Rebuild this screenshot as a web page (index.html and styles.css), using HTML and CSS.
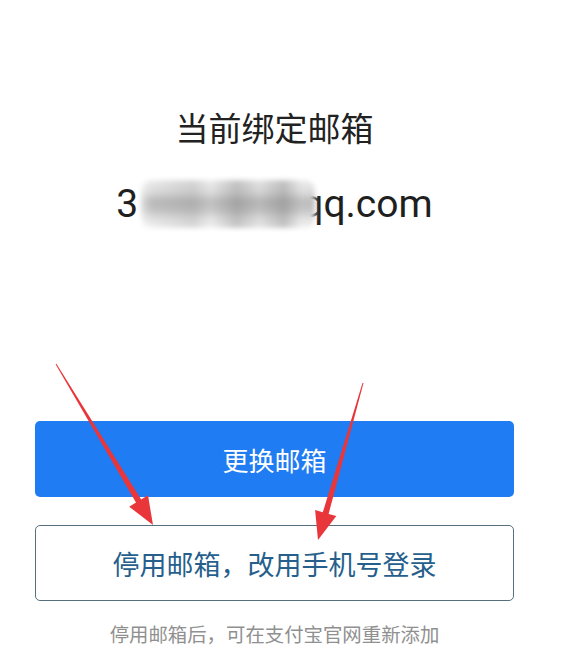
FILE: index.html
```html
<!DOCTYPE html>
<html lang="zh-CN">
<head>
<meta charset="utf-8">
<link rel="stylesheet" href="styles.css">
</head>
<body>
<div class="page">
  <div class="info">
    <div class="title">当前绑定邮箱</div>
    <div class="email"><span>3</span><span class="mask"></span><span class="tail">qq.com</span></div>
  </div>
  <div class="actions">
    <button class="btn primary">更换邮箱</button>
    <button class="btn outline">停用邮箱，改用手机号登录</button>
    <div class="note">停用邮箱后，可在支付宝官网重新添加</div>
  </div>
  <svg class="arrows" width="583" height="666" viewBox="0 0 583 666">
    <polygon fill="#e8363a" points="55.6,364.3 136,502.5 129.2,506.7 153,525 148,495.3 141.2,499.5 56.4,363.7"/>
    <polygon fill="#e8363a" points="362.5,382.9 322.8,512.3 315.1,510.1 318,540 336.3,516.1 328.6,513.9 363.5,383.1"/>
  </svg>
</div>
</body>
</html>
```
FILE: styles.css
```css
html, body {
  margin: 0;
  padding: 0;
  background: #ffffff;
}
.page {
  position: relative;
  width: 583px;
  height: 666px;
  overflow: hidden;
  font-family: "Noto Sans CJK SC", "Noto Sans", sans-serif;
}
.info {
  width: 479px;
  margin-left: 35px;
  padding-top: 105px;
  display: flex;
  flex-direction: column;
  align-items: center;
}
.title {
  font-size: 33px;
  line-height: 44px;
  color: #222222;
}
.email {
  margin-top: 30px;
  display: flex;
  align-items: center;
  font-family: Roboto, "Noto Sans", sans-serif;
  font-size: 39px;
  line-height: 50px;
  color: #1f1f1f;
}
.mask {
  position: relative;
  z-index: 1;
  display: inline-block;
  width: 174px;
  height: 48px;
  margin-left: 3px;
  margin-right: -14px;
  background:
    linear-gradient(90deg, rgba(255,255,255,0.5) 0%, rgba(255,255,255,0) 6%, rgba(120,120,120,0.18) 30%, rgba(255,255,255,0.1) 40%, rgba(110,110,110,0.3) 55%, rgba(160,160,160,0.1) 68%, rgba(100,100,100,0.3) 82%, rgba(255,255,255,0.05) 92%),
    linear-gradient(180deg, #ededed 0%, #dadada 25%, #b9b9b9 45%, #c2c2c2 62%, #e0e0e0 80%, #f2f2f2 100%);
  filter: blur(2.5px);
  border-radius: 10px;
}
.actions {
  width: 479px;
  margin-left: 35px;
  margin-top: 192px;
  display: flex;
  flex-direction: column;
  gap: 28px;
}
.btn {
  height: 76px;
  width: 100%;
  border-radius: 5px;
  font-family: "Noto Sans CJK SC", sans-serif;
  cursor: pointer;
  padding: 0;
}
.primary {
  background: #1f7cf3;
  border: none;
  color: #ffffff;
  font-size: 26px;
}
.outline {
  background: #ffffff;
  border: 1.5px solid #56707f;
  color: #265f8c;
  font-size: 27px;
}
.note {
  margin-top: -10px;
  text-align: center;
  font-size: 19.4px;
  line-height: 30px;
  color: #909090;
}
.arrows {
  position: absolute;
  left: 0;
  top: 0;
  pointer-events: none;
}
```
